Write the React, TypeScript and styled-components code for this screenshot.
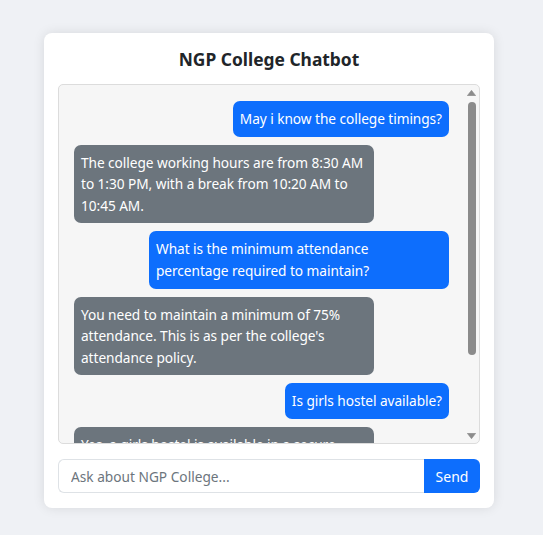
import React from "react";
import styled, { createGlobalStyle } from "styled-components";

const Global = createGlobalStyle`
  html, body { margin: 0; padding: 0; }
  body {
    background: #eff1f5;
    font-family: "Noto Sans", "Open Sans", sans-serif;
    color: #212529;
  }
  * { box-sizing: border-box; }
`;

const Page = styled.div`
  padding: 33px 0 27px 44px;
`;

const Card = styled.div`
  width: 450px;
  background: #fff;
  border-radius: 8px;
  box-shadow: 0 0 12px rgba(0, 0, 0, 0.1);
  padding: 14px 14px 15px;
  display: flex;
  flex-direction: column;
`;

const Title = styled.h5`
  margin: 0 0 13px;
  font-size: 17.4px;
  font-weight: 700;
  line-height: 24px;
  text-align: center;
  color: #212529;
`;

const ChatFrame = styled.div`
  height: 360px;
  border: 1px solid #dcdcdc;
  border-radius: 5px;
  background: #f6f6f6;
  overflow: hidden;
  display: flex;
`;

const Messages = styled.div`
  flex: 1;
  min-width: 0;
  overflow: hidden;
  padding: 16px 15px;
  display: flex;
  flex-direction: column;
  gap: 8px;
`;

const ScrollTrack = styled.div`
  width: 15px;
  flex-shrink: 0;
  display: flex;
  flex-direction: column;
  align-items: center;
  padding: 5px 0 4px;
`;

const Thumb = styled.div`
  width: 8px;
  height: 253px;
  margin-top: 6px;
  border-radius: 4px;
  background: #8b8b8b;
`;

const Spacer = styled.div`
  flex: 1;
`;

const Arrow = styled.svg`
  display: block;
  width: 9px;
  height: 6px;
`;

const Bubble = styled.div<{ $user?: boolean }>`
  max-width: 80%;
  align-self: ${(p) => (p.$user ? "flex-end" : "flex-start")};
  background: ${(p) => (p.$user ? "#0d6efd" : "#6c757d")};
  color: #fff;
  font-size: 13.7px;
  letter-spacing: -0.06px;
  line-height: 21.6px;
  padding: 7px 7px;
  border-radius: 7px;
  flex-shrink: 0;
`;

const InputGroup = styled.form`
  margin-top: 15px;
  display: flex;
  height: 34px;
`;

const Input = styled.input`
  flex: 1;
  min-width: 0;
  border: 1px solid #dee2e6;
  border-right: none;
  border-radius: 6px 0 0 6px;
  padding: 0 12px;
  font-family: inherit;
  font-size: 13.7px;
  color: #212529;
  background: #fff;
  outline: none;
  &::placeholder { color: #6c757d; }
`;

const SendButton = styled.button`
  width: 56px;
  border: none;
  border-radius: 0 6px 6px 0;
  background: #0d6efd;
  color: #fff;
  font-family: inherit;
  font-size: 14px;
  cursor: pointer;
`;

const messages: { user: boolean; text: string }[] = [
  { user: true, text: "May i know the college timings?" },
  {
    user: false,
    text: "The college working hours are from 8:30 AM to 1:30 PM, with a break from 10:20 AM to 10:45 AM.",
  },
  { user: true, text: "What is the minimum attendance percentage required to maintain?" },
  {
    user: false,
    text: "You need to maintain a minimum of 75% attendance. This is as per the college's attendance policy.",
  },
  { user: true, text: "Is girls hostel available?" },
  {
    user: false,
    text: "Yes, a girls hostel is available in a secure environment within the campus, with all the necessary facilities.",
  },
];

export default function App() {
  return (
    <Page>
      <Global />
      <Card>
        <Title>NGP College Chatbot</Title>
        <ChatFrame>
          <Messages>
            {messages.map((m, i) => (
              <Bubble key={i} $user={m.user}>
                {m.text}
              </Bubble>
            ))}
          </Messages>
          <ScrollTrack>
            <Arrow viewBox="0 0 9 6">
              <path d="M4.5 0.3 L8.7 5.7 L0.3 5.7 Z" fill="#8b8b8b" strokeLinejoin="round" stroke="#8b8b8b" strokeWidth="0.6" />
            </Arrow>
            <Thumb />
            <Spacer />
            <Arrow viewBox="0 0 9 6">
              <path d="M0.3 0.3 L8.7 0.3 L4.5 5.7 Z" fill="#8b8b8b" strokeLinejoin="round" stroke="#8b8b8b" strokeWidth="0.6" />
            </Arrow>
          </ScrollTrack>
        </ChatFrame>
        <InputGroup onSubmit={(e) => e.preventDefault()}>
          <Input placeholder="Ask about NGP College..." />
          <SendButton type="submit">Send</SendButton>
        </InputGroup>
      </Card>
    </Page>
  );
}
